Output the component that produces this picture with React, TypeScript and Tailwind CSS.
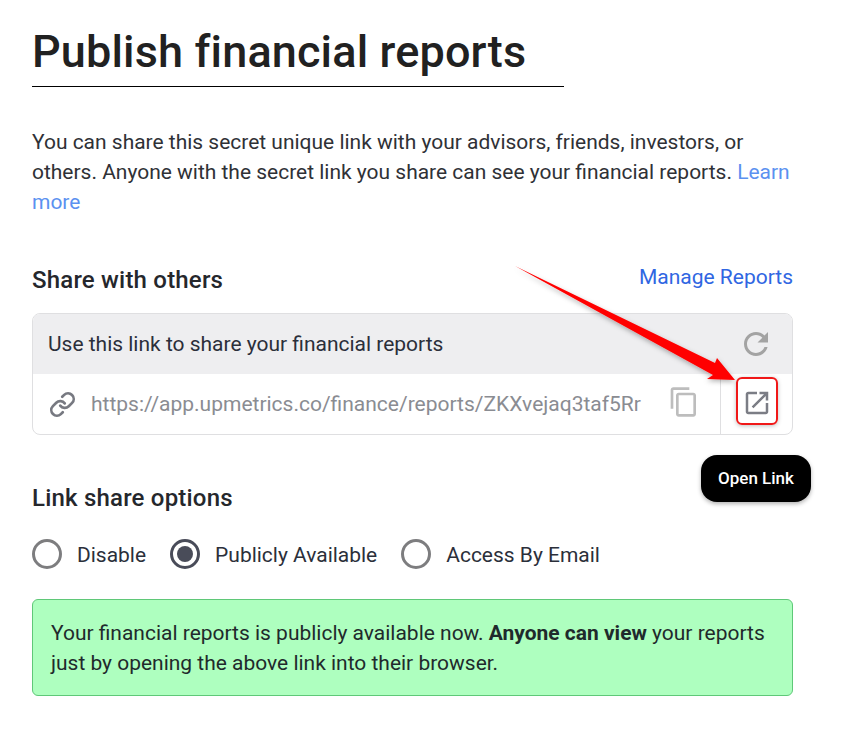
import React from 'react';
import { Link } from 'lucide-react';

const Radio: React.FC<{ label: string; checked?: boolean }> = ({ label, checked }) => (
  <label className="flex items-center gap-[15px]">
    <span className={`w-[30px] h-[30px] rounded-full border-[3px] flex items-center justify-center ${checked ? 'border-[#494c59]' : 'border-[#7d7d7f]'}`}>
      {checked && <span className="w-[16px] h-[16px] rounded-full bg-[#494c59]"></span>}
    </span>
    <span className="h-[30px] leading-[33px] text-[20.97px] text-[#2b2f3a]">{label}</span>
  </label>
);

export default function App() {
  return (
    <div className="relative w-[864px] h-[739px] bg-white overflow-hidden font-['Roboto',sans-serif]">
      <div className="w-[761px] ml-[32px]">
        <h1 className="w-[532px] h-[87px] pt-[22px] border-b border-black text-[45px] tracking-[0.15px] leading-[60px] font-medium text-[#212121]">
          Publish financial reports
        </h1>
        <p className="mt-[40px] text-[20.97px] leading-[30px] text-[#2f3136]">
          You can share this secret unique link with your advisors, friends, investors, or others. Anyone with the secret link you share can see your financial reports. <a className="text-[#5b91f0]">Learn more</a>
        </p>

        <div className="mt-[45px] flex items-center justify-between h-[36px]">
          <h2 className="text-[24px] tracking-[0.2px] font-medium text-[#25272c]">Share with others</h2>
          <a className="text-[21px] text-[#2f66e2] -mt-[5px]">Manage Reports</a>
        </div>

        <div className="mt-[15px] border border-[#dfdfe1] rounded-[8px] overflow-hidden">
          <div className="h-[60px] bg-[#eeeef0] flex items-center justify-between pl-[15px] pr-[18px]">
            <span className="pt-[2px] text-[20.97px] text-[#2b2f3a]">Use this link to share your financial reports</span>
            <svg width="36" height="36" viewBox="0 0 24 24" fill="#a3a3a3">
              <path d="M17.65 6.35C16.2 4.9 14.21 4 12 4c-4.42 0-7.99 3.58-7.99 8s3.57 8 7.99 8c3.73 0 6.84-2.55 7.73-6h-2.08c-.82 2.33-3.04 4-5.65 4-3.31 0-6-2.69-6-6s2.69-6 6-6c1.66 0 3.14.69 4.22 1.78L13 11h7V4l-2.35 2.35z" />
            </svg>
          </div>
          <div className="h-[60px] flex items-center">
            <Link className="ml-[16px] w-[27px] h-[27px] text-[#777981]" strokeWidth={2.4} />
            <span className="ml-[15px] pt-[2px] w-[552px] whitespace-nowrap overflow-hidden text-[21px] text-[#8a8c92]">
              https://app.upmetrics.co/finance/reports/ZKXvejaq3taf5Rr
            </span>
            <svg className="ml-[25px] -mt-[4px]" width="32" height="32" viewBox="0 0 24 24" fill="#bdbdbd">
              <path d="M16 1H4c-1.1 0-2 .9-2 2v14h2V3h12V1zm3 4H8c-1.1 0-2 .9-2 2v14c0 1.1.9 2 2 2h11c1.1 0 2-.9 2-2V7c0-1.1-.9-2-2-2zm0 16H8V7h11v14z" />
            </svg>
            <div className="ml-[20px] h-full border-l border-[#dfdfe1] flex-1 flex items-center justify-center">
              <svg className="-mt-[2px]" width="30" height="30" viewBox="0 0 24 24" fill="#7b7d85">
                <path d="M19 19H5V5h7V3H5c-1.11 0-2 .9-2 2v14c0 1.1.89 2 2 2h14c1.1 0 2-.9 2-2v-7h-2v7zM14 3v2h3.59l-9.83 9.83 1.41 1.41L19 6.41V10h2V3h-7z" />
              </svg>
            </div>
          </div>
        </div>

        <h2 className="mt-[48px] text-[24px] tracking-[0.2px] leading-[30px] font-medium text-[#25272c]">Link share options</h2>

        <div className="mt-[26px] flex items-center gap-[24px]">
          <Radio label="Disable" />
          <Radio label="Publicly Available" checked />
          <Radio label="Access By Email" />
        </div>

        <div className="mt-[30px] h-[97px] bg-[#aeffbf] border border-[#5fc878] rounded-[6px] px-[18px] py-[18px] text-[20.97px] leading-[30px] text-[#1f2a2c]">
          Your financial reports is publicly available now. <b className="font-bold">Anyone can view</b> your reports just by opening the above link into their browser.
        </div>
      </div>

      <div className="absolute left-[701px] top-[455px] w-[110px] h-[47px] rounded-[16px] bg-black text-white text-[17px] font-medium flex items-center justify-center shadow-[0_2px_4px_rgba(0,0,0,0.3)]">
        Open Link
      </div>

      <div className="absolute left-[736px] top-[377px] w-[42px] h-[48px] rounded-[6px] border-2 border-[#f01818] shadow-[0_1px_4px_rgba(0,0,0,0.25)]"></div>

      <svg className="absolute left-0 top-0 pointer-events-none" width="864" height="739" viewBox="0 0 864 739">
        <defs>
          <filter id="arrowShadow" x="-10%" y="-10%" width="120%" height="130%">
            <feDropShadow dx="0" dy="2" stdDeviation="2.5" floodColor="#000" floodOpacity="0.3" />
          </filter>
        </defs>
        <polygon points="515,266 715,363 717,358 735,380 707,379 713,375" fill="#ff0000" filter="url(#arrowShadow)" />
      </svg>
    </div>
  );
}
